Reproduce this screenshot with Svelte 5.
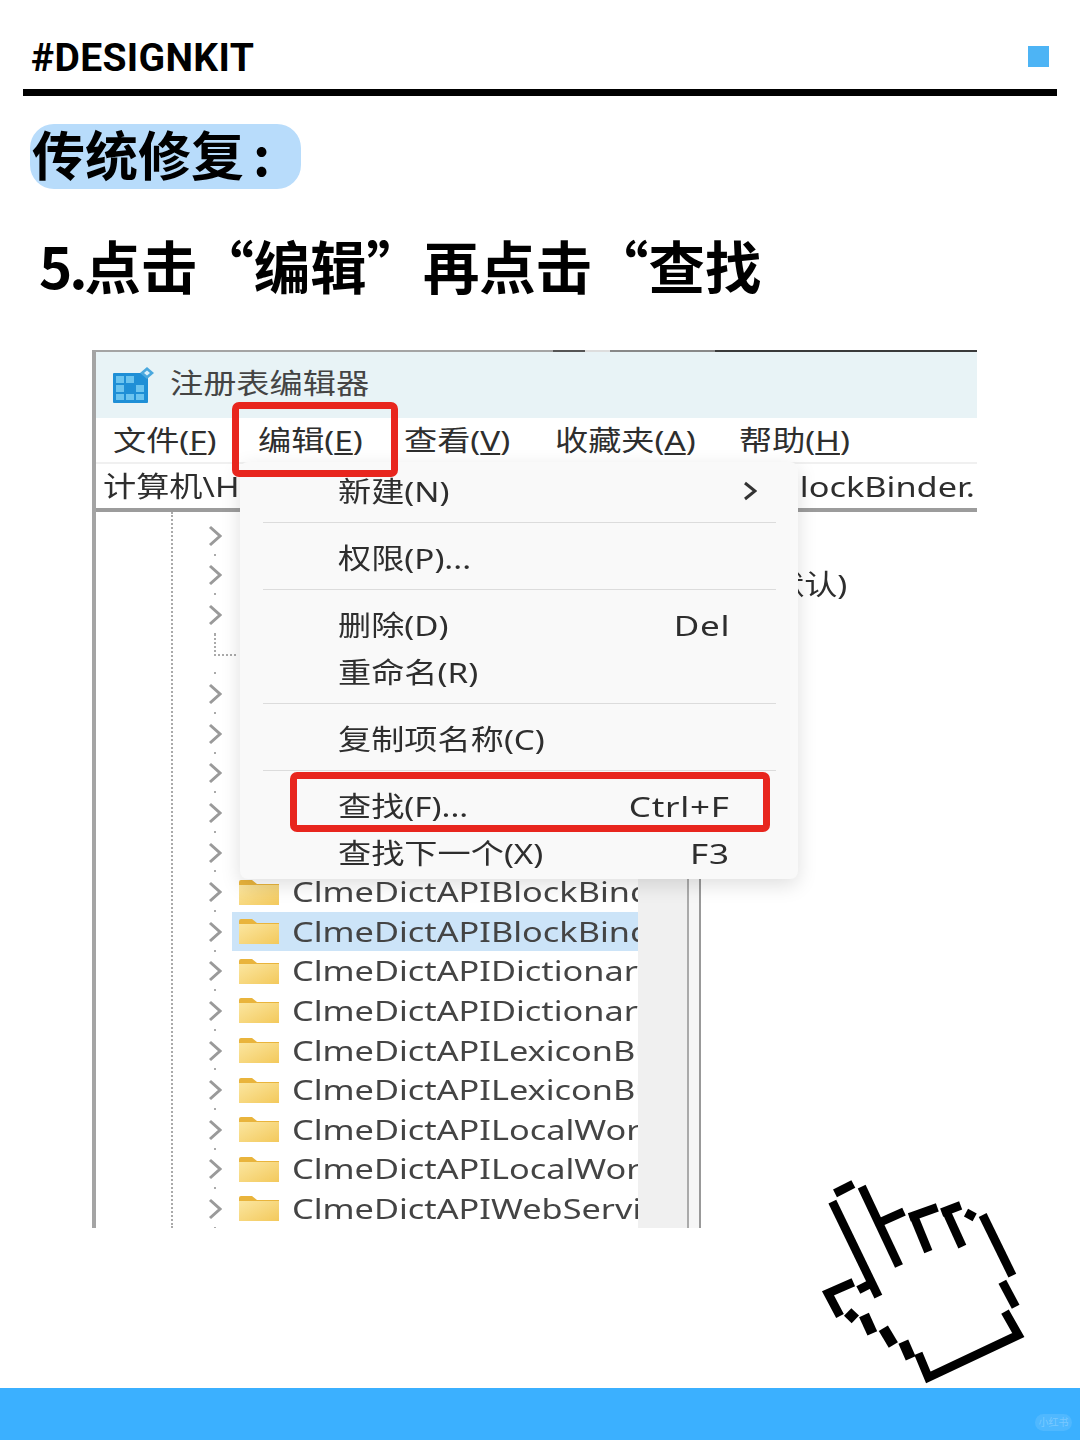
<script>
  const menuBar = [
    ['文件(', 'F', ')'],
    ['编辑(', 'E', ')'],
    ['查看(', 'V', ')'],
    ['收藏夹(', 'A', ')'],
    ['帮助(', 'H', ')']
  ];
  const plainRows = [0, 1, 2, 'conn', 4, 5, 6, 7, 8];
  const folders = [
    'ClmeDictAPIBlockBinder', 'ClmeDictAPIBlockBinder', 'ClmeDictAPIDictionary', 'ClmeDictAPIDictionary',
    'ClmeDictAPILexiconBuilder', 'ClmeDictAPILexiconBuilder', 'ClmeDictAPILocalWord', 'ClmeDictAPILocalWord',
    'ClmeDictAPIWebService'
  ];
  const menuGroups = [
    [{ label: '新建(N)', arrow: true }],
    [{ label: '权限(P)...' }],
    [{ label: '删除(D)', key: 'Del' }, { label: '重命名(R)' }],
    [{ label: '复制项名称(C)' }],
    [{ label: '查找(F)...', key: 'Ctrl+F' }, { label: '查找下一个(X)', key: 'F3' }]
  ];
  const hand = [
    'M105 100L160 72', 'M97 125L235 410', 'M185 80L297 318', 'M238 188L312 155',
    'M328 172L412 142', 'M340 165L385 275', 'M425 158L482 136', 'M437 150L487 260',
    'M498 158L524 172', 'M548 165L637 347', 'M607 365L647 440',
    'M615 455L655 525L385 652L355 580',
    'M160 367L84 400L120 468', 'M175 390L222 366'
  ];
  const steps = ['M310 545L332 595', 'M250 505L280 555', 'M192 465L217 520', 'M143 456L166 478'];
</script>

<div class="page">
  <header class="brand">
    <span class="brand-name">#DESIGNKIT</span>
    <span class="brand-mark"></span>
  </header>

  <div class="tag"><span>传统修复<span class="colon">:</span></span></div>
  <h2 class="step"><span class="num">5.</span>点击“编辑”再点击“查找</h2>

  <section class="win">
    <div class="topline"><i class="a"></i><i class="b"></i><i class="c"></i></div>
    <div class="titlebar">
      <svg class="regicon" viewBox="0 0 42 36" width="42" height="36">
        <rect x="0" y="6" width="35" height="30" rx="1" fill="#1f8fd6" />
        <g fill="#6cc4ef">
          <rect x="3" y="9" width="8" height="7" /><rect x="13" y="9" width="8" height="7" />
          <rect x="3" y="18" width="8" height="7" /><rect x="23" y="18" width="8" height="7" />
          <rect x="3" y="27" width="8" height="6" /><rect x="13" y="27" width="8" height="6" /><rect x="23" y="27" width="8" height="6" />
        </g>
        <path d="M34 0L41 6L34 12L27 6Z" fill="#4aa8de" /><path d="M34 3.500L37 6L34 8.500L31 6Z" fill="#d8f0fb" />
      </svg>
      <span class="t title">注册表编辑器</span>
    </div>
    <nav class="menubar">
      {#each menuBar as m}
        <span class="cell"><span class="t">{m[0]}<u>{m[1]}</u>{m[2]}</span></span>
      {/each}
    </nav>
    <div class="address">
      <span class="t">计算机\H</span>
      <span class="t end wide">lockBinder.</span>
    </div>
    <div class="panes">
      <div class="tree">
        {#each plainRows as r}
          <div class="row">
            {#if r === 'conn'}
              <span class="conn"></span>
            {:else}
              <svg class="chev" viewBox="0 0 14 22" width="14" height="22"><path d="M2 2L12 11L2 20" /></svg>
            {/if}
          </div>
        {/each}
        {#each folders as f, i}
          <div class="row">
            <svg class="chev" viewBox="0 0 14 22" width="14" height="22"><path d="M2 2L12 11L2 20" /></svg>
            <div class="item" class:sel={i === 1}>
              <svg class="folder" viewBox="0 0 40 25" width="40" height="25">
                <defs>
                  <linearGradient id="fg{i}" x1="0" y1="0" x2="1" y2="1">
                    <stop offset="0" stop-color="#fbe6a0" /><stop offset="1" stop-color="#f3c95c" />
                  </linearGradient>
                </defs>
                <path d="M0 2Q0 0 2 0H13L18 4H40V25H0Z" fill="#e9b43c" />
                <rect x="0" y="5" width="40" height="20" fill="url(#fg{i})" />
              </svg>
              <span class="t wide name">{f}</span>
            </div>
          </div>
        {/each}
      </div>
      <div class="scroll"></div>
      <div class="scroll-edge"></div>
      <div class="values"><span class="t">(默认)</span></div>
    </div>

    <div class="menu">
      {#each menuGroups as g, gi}
        {#if gi > 0}<div class="sep"></div>{/if}
        {#each g as it}
          <div class="mi">
            <span class="t">{it.label}</span>
            {#if it.arrow}
              <svg class="sub" viewBox="0 0 14 22" width="14" height="22"><path d="M2 3L12 11L2 19" /></svg>
            {/if}
            {#if it.key}<span class="t end key">{it.key}</span>{/if}
          </div>
        {/each}
      {/each}
    </div>
    <div class="mark mark-edit"></div>
    <div class="mark mark-find"></div>
  </section>

  <svg class="hand" viewBox="0 0 840 840" width="280" height="280">
    {#each hand as d}<path {d} />{/each}
    {#each steps as d}<path class="stair" {d} />{/each}
  </svg>

  <footer class="foot"><span class="wm">小红书</span></footer>
</div>

<style>
  :global(body) { margin: 0; background: #fff; }
  .page {
    position: relative;
    width: 1080px;
    height: 1440px;
    overflow: hidden;
    display: flex;
    flex-direction: column;
    font-family: "Noto Sans", "Noto Sans CJK SC", sans-serif;
    color: #000;
  }
  .brand {
    margin: 0 23px;
    height: 89px;
    box-sizing: border-box;
    padding: 36px 8px 0 8px;
    display: flex;
    justify-content: space-between;
    align-items: flex-start;
    box-shadow: 0 7px 0 #000;
  }
  .brand-name {
    font: 700 39px/44px "Roboto", sans-serif;
    letter-spacing: 0.35px;
  }
  .brand-mark { width: 21px; height: 21px; margin-top: 10px; background: #4db4f5; }
  .tag {
    align-self: flex-start;
    margin: 35px 0 0 30px;
    width: 271px;
    height: 65px;
    box-sizing: border-box;
    padding-left: 2px;
    border-radius: 24px;
    background: #b8dcfb;
    font: 700 53px/58px "Noto Sans CJK SC", sans-serif;
    white-space: nowrap;
  }
  .colon { margin-left: 9px; }
  .step {
    margin: 38px 0 0 39px;
    font: 700 56.4px/76px "Noto Sans CJK SC", sans-serif;
    white-space: nowrap;
  }
  .num { letter-spacing: -3px; }
  .win {
    position: absolute;
    left: 92px;
    top: 350px;
    width: 885px;
    height: 878px;
    box-sizing: border-box;
    border-left: 4px solid #a4a4a4;
    display: flex;
    flex-direction: column;
    font-size: 28px;
    color: #2e2e2e;
    filter: blur(0.55px);
  }
  .t {
    display: inline-block;
    white-space: nowrap;
    line-height: 36px;
    transform: scaleX(1.185);
    transform-origin: 0 50%;
  }
  .t.end { transform-origin: 100% 50%; }
  .t.wide { transform: scaleX(1.225); }
  .t.key { transform: scaleX(1.25); letter-spacing: 0.6px; }
  .topline { height: 2px; display: flex; flex: none; margin-left: -4px; }
  .topline i { display: block; }
  .topline .a { width: 461px; background: #a4a4a4; }
  .topline .b { width: 162px; background: linear-gradient(90deg, #555 20%, #ddd 20%, #ddd 35%, #888 35%); }
  .topline .c { flex: 1; background: #3a3a3a; }
  .titlebar {
    height: 66px;
    flex: none;
    display: flex;
    align-items: center;
    background: #e8f3f6;
    padding-left: 17px;
  }
  .regicon { flex: none; margin-right: 15px; }
  .title { color: #444; margin-bottom: 4px; }
  .menubar {
    height: 44px;
    flex: none;
    display: grid;
    grid-template-columns: 145px 146px 151px 184px 1fr;
    align-items: center;
    padding-left: 17px;
    background: #fff;
  }
  .address {
    height: 50px;
    flex: none;
    box-sizing: border-box;
    border-top: 2px solid #f0f0f0;
    border-bottom: 4px solid #9c9c9c;
    display: flex;
    justify-content: space-between;
    align-items: center;
    padding: 0 2px 0 7px;
  }
  .panes { flex: 1; min-height: 0; display: flex; overflow: hidden; }
  .tree {
    width: 465px;
    flex: none;
    margin-left: 75px;
    padding-top: 4px;
    border-left: 2px dotted #aaa;
    overflow: hidden;
  }
  .row {
    position: relative;
    height: 39.6px;
    display: flex;
    align-items: center;
    padding-left: 35px;
  }
  .row::after {
    content: "";
    position: absolute;
    left: 41px;
    bottom: 0;
    width: 2px;
    height: 2px;
    background: #aaa;
  }
  .chev { flex: none; fill: none; stroke: #9a9a9a; stroke-width: 3; }
  .conn {
    width: 20px;
    height: 20px;
    margin: 0 0 20px 6px;
    border-left: 2px dotted #aaa;
    border-bottom: 2px dotted #aaa;
  }
  .item {
    flex: 1;
    min-width: 0;
    height: 39px;
    margin-left: 10px;
    padding-left: 7px;
    display: flex;
    align-items: center;
  }
  .item.sel { background: #cce4f8; }
  .folder { flex: none; margin-right: 13px; }
  .name { color: #444; margin-bottom: 2px; }
  .scroll {
    width: 49px;
    flex: none;
    background: #f0f0f0;
  }
  .scroll-edge {
    width: 10px;
    flex: none;
    background: #f6f6f6;
    border-left: 2px solid #aaa;
    border-right: 2px solid #999;
  }
  .values { flex: 1; padding: 53px 0 0 60px; }
  .menu {
    position: absolute;
    left: 144px;
    top: 112px;
    width: 558px;
    height: 417px;
    box-sizing: border-box;
    padding-top: 5px;
    border-radius: 8px;
    background: #f9f9f9;
    box-shadow: 0 6px 20px rgba(0, 0, 0, 0.13);
    z-index: 2;
  }
  .mi {
    height: 47px;
    display: flex;
    justify-content: space-between;
    align-items: center;
    padding: 0 68px 0 98px;
  }
  .sub { fill: none; stroke: #333; stroke-width: 3; margin-right: -27px; }
  .sep { height: 1px; margin: 8px 22px 11px 23px; background: #dcdcdc; }
  .mark {
    position: absolute;
    box-sizing: border-box;
    border: 7px solid #e8261e;
    border-radius: 7px;
    z-index: 3;
  }
  .mark-edit { left: 136px; top: 52px; width: 166px; height: 75px; }
  .mark-find { left: 194px; top: 422px; width: 480px; height: 60px; }
  .hand {
    position: absolute;
    left: 800px;
    top: 1160px;
    fill: none;
    stroke: #000;
    stroke-width: 26;
  }
  .stair { stroke-width: 32; }
  .foot {
    margin-top: auto;
    height: 52px;
    box-sizing: border-box;
    background: #3bb0ff;
    display: flex;
    justify-content: flex-end;
    align-items: flex-end;
    padding: 0 8px 9px 0;
  }
  .wm {
    width: 37px;
    height: 17px;
    border-radius: 9px;
    background: rgba(255, 255, 255, 0.1);
    color: rgba(255, 255, 255, 0.25);
    font-size: 10px;
    line-height: 17px;
    text-align: center;
  }
</style>
